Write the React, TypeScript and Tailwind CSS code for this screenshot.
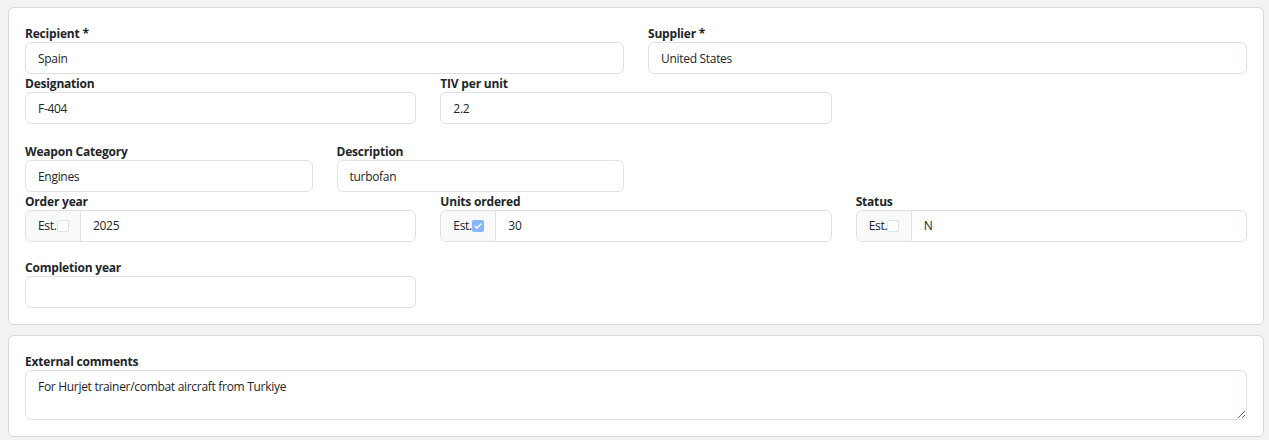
import type { ReactNode } from "react";

type FieldProps = {
  label: string;
  span: string;
  children: ReactNode;
};

function Label({ children }: { children: ReactNode }) {
  return (
    <div className="h-[18px] text-[12px] leading-[20px] font-bold tracking-[-0.2px] text-[#212529]">
      {children}
    </div>
  );
}

function Field({ label, span, children }: FieldProps) {
  return (
    <div className={span}>
      <Label>{label}</Label>
      {children}
    </div>
  );
}

function TextInput({ value }: { value: string }) {
  return (
    <input
      readOnly
      value={value}
      className="block h-8 w-full rounded-md border border-[#dee2e6] bg-white px-3 text-[12px] tracking-[-0.3px] text-[#212529] outline-none"
    />
  );
}

function Checkbox({ checked }: { checked?: boolean }) {
  if (checked) {
    return (
      <span className="flex h-[12px] w-[12px] items-center justify-center rounded-[2px] bg-[#86b7fe]">
        <svg viewBox="0 0 12 12" className="h-[10px] w-[10px]" fill="none">
          <path d="M2.5 6.2l2.3 2.3 4.7-4.8" stroke="white" strokeWidth="1.6" strokeLinecap="round" strokeLinejoin="round" />
        </svg>
      </span>
    );
  }
  return <span className="h-[12px] w-[12px] rounded-[2px] border border-[#dee2e6] bg-white" />;
}

function EstInput({ value, est }: { value: string; est?: boolean }) {
  return (
    <div className="flex h-8 w-full rounded-md border border-[#dee2e6] bg-white">
      <div className="flex w-[55px] items-center rounded-l-md border-r border-[#dee2e6] bg-[#f8f9fa] pl-3 text-[12px] tracking-[-0.3px] text-[#212529]">
        <span>Est.</span>
        <Checkbox checked={est} />
      </div>
      <input
        readOnly
        value={value}
        className="min-w-0 flex-1 rounded-r-md bg-white px-3 text-[12px] tracking-[-0.3px] text-[#212529] outline-none"
      />
    </div>
  );
}

export default function App() {
  return (
    <div
      className="min-h-[440px] bg-[#f3f3f3] pt-[7px] pl-2 pr-[5px] pb-1"
      style={{ fontFamily: '"Open Sans", "Noto Sans", sans-serif' }}
    >
      <div className="rounded-md border border-[#d9d9d9] bg-white p-4">
        <div className="grid grid-cols-12 gap-x-6">
          <Field label="Recipient *" span="col-span-6">
            <TextInput value="Spain" />
          </Field>
          <Field label="Supplier *" span="col-span-6">
            <TextInput value="United States" />
          </Field>

          <Field label="Designation" span="col-span-4">
            <TextInput value="F-404" />
          </Field>
          <Field label="TIV per unit" span="col-span-4">
            <TextInput value="2.2" />
          </Field>
          <div className="col-span-4" />

          <div className="col-span-12 h-[18px]" />

          <Field label="Weapon Category" span="col-span-3">
            <TextInput value="Engines" />
          </Field>
          <Field label="Description" span="col-span-3">
            <TextInput value="turbofan" />
          </Field>
          <div className="col-span-6" />

          <Field label="Order year" span="col-span-4">
            <EstInput value="2025" />
          </Field>
          <Field label="Units ordered" span="col-span-4">
            <EstInput value="30" est />
          </Field>
          <Field label="Status" span="col-span-4">
            <EstInput value="N" />
          </Field>

          <div className="col-span-12 h-4" />

          <Field label="Completion year" span="col-span-4">
            <TextInput value="" />
          </Field>
        </div>
      </div>

      <div className="mt-[10px] rounded-md border border-[#d9d9d9] bg-white px-4 pt-4 pb-4">
        <Label>External comments</Label>
        <textarea
          readOnly
          value="For Hurjet trainer/combat aircraft from Turkiye"
          className="block h-[50px] w-full rounded-md border border-[#dee2e6] bg-white px-3 py-[7px] text-[12px] tracking-[-0.3px] text-[#212529] outline-none"
        />
      </div>
    </div>
  );
}
